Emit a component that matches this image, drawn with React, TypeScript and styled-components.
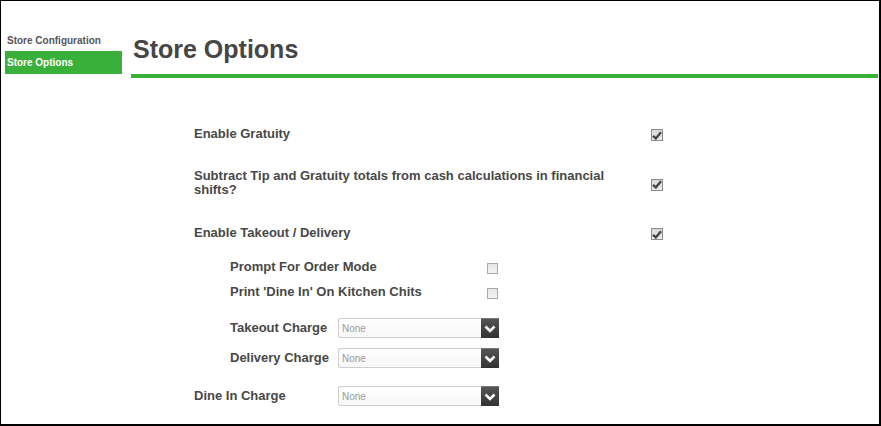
import React from "react";
import styled, { createGlobalStyle } from "styled-components";

const Global = createGlobalStyle`
  html, body { margin: 0; padding: 0; background: #fff; }
  body { font-family: "Liberation Sans", Arial, sans-serif; }
`;

const Frame = styled.div`
  width: 881px;
  height: 426px;
  box-sizing: border-box;
  border-top: 1px solid #000;
  border-left: 1px solid #000;
  border-right: 2px solid #000;
  border-bottom: 2px solid #000;
  display: flex;
  background: #fff;
  overflow: hidden;
`;

const Sidebar = styled.nav`
  width: 130px;
  flex: none;
  box-sizing: border-box;
  padding: 34px 0 0 4px;
  display: flex;
  flex-direction: column;
`;

const NavItem = styled.div<{ $active?: boolean }>`
  width: 117px;
  height: ${(p) => (p.$active ? "23px" : "16px")};
  line-height: ${(p) => (p.$active ? "23px" : "12px")};
  padding-left: 2px;
  box-sizing: border-box;
  font-size: 10px;
  font-weight: bold;
  color: ${(p) => (p.$active ? "#fff" : "#555")};
  background: ${(p) => (p.$active ? "#39b03a" : "transparent")};
`;

const Main = styled.main`
  flex: 1;
  margin-right: 1px;
  display: flex;
  flex-direction: column;
`;

const Title = styled.h1`
  margin: 0;
  padding: 34px 0 0 2px;
  font-size: 25px;
  line-height: 29px;
  font-weight: bold;
  color: #464646;
`;

const Rule = styled.div`
  height: 4px;
  background: #39b03a;
  margin-top: 10px;
`;

const Form = styled.div`
  padding: 48px 0 0 63px;
  display: flex;
  flex-direction: column;
`;

const Row = styled.div<{ $indent?: boolean; $mt?: number; $gap?: number }>`
  display: flex;
  align-items: center;
  gap: ${(p) => p.$gap ?? 0}px;
  margin-top: ${(p) => p.$mt ?? 0}px;
  padding-left: ${(p) => (p.$indent ? 36 : 0)}px;
`;

const Label = styled.div<{ $w: number }>`
  width: ${(p) => p.$w}px;
  flex: none;
  font-size: 13px;
  line-height: 14px;
  font-weight: bold;
  color: #484848;
`;

const Box = styled.span<{ $checked?: boolean }>`
  display: inline-flex;
  align-items: center;
  justify-content: center;
  box-sizing: border-box;
  width: ${(p) => (p.$checked ? 12 : 11)}px;
  height: ${(p) => (p.$checked ? 12 : 11)}px;
  margin-top: 3px;
  border: 1px solid ${(p) => (p.$checked ? "#8c8c8c" : "#a9a9a9")};
  background: ${(p) => (p.$checked ? "linear-gradient(#d8d8d8, #ececec)" : "linear-gradient(#e6e6e6, #f4f4f4)")};
`;

const SelectWrap = styled.div`
  display: flex;
  width: 161px;
  height: 20px;
`;

const SelectField = styled.div`
  flex: 1;
  box-sizing: border-box;
  border: 1px solid #cfcfcf;
  border-right: none;
  border-radius: 3px 0 0 3px;
  padding-left: 3px;
  font-size: 10px;
  line-height: 19px;
  color: #9a9a9a;
  background: linear-gradient(#fff, #f7f7f7);
`;

const SelectButton = styled.div`
  width: 18px;
  flex: none;
  display: flex;
  align-items: center;
  justify-content: center;
  background: linear-gradient(#555, #333);
  border-top: 1px solid #777;
  box-sizing: border-box;
`;

const Check = ({ checked }: { checked?: boolean }) => (
  <Box $checked={checked}>
    {checked && (
      <svg width="10" height="9" viewBox="0 0 10 9">
        <path d="M1 4.8 L3.8 7.4 L9 1.2" fill="none" stroke="#454545" strokeWidth="2.4" />
      </svg>
    )}
  </Box>
);

const Select = () => (
  <SelectWrap>
    <SelectField>None</SelectField>
    <SelectButton>
      <svg width="12" height="8" viewBox="0 0 12 8">
        <path d="M1.5 1.5 L6 6 L10.5 1.5" fill="none" stroke="#fff" strokeWidth="2.6" />
      </svg>
    </SelectButton>
  </SelectWrap>
);

export default function App() {
  return (
    <>
      <Global />
      <Frame>
        <Sidebar>
          <NavItem>Store Configuration</NavItem>
          <NavItem $active>Store Options</NavItem>
        </Sidebar>
        <Main>
          <Title>Store Options</Title>
          <Rule />
          <Form>
            <Row $gap={17}>
              <Label $w={440}>Enable Gratuity</Label>
              <Check checked />
            </Row>
            <Row $mt={28} $gap={17}>
              <Label $w={440}>Subtract Tip and Gratuity totals from cash calculations in financial shifts?</Label>
              <Check checked />
            </Row>
            <Row $mt={28} $gap={17}>
              <Label $w={440}>Enable Takeout / Delivery</Label>
              <Check checked />
            </Row>
            <Row $indent $mt={20}>
              <Label $w={257}>Prompt For Order Mode</Label>
              <Check />
            </Row>
            <Row $indent $mt={11}>
              <Label $w={257}>Print 'Dine In' On Kitchen Chits</Label>
              <Check />
            </Row>
            <Row $indent $mt={19}>
              <Label $w={108}>Takeout Charge</Label>
              <Select />
            </Row>
            <Row $indent $mt={10}>
              <Label $w={108}>Delivery Charge</Label>
              <Select />
            </Row>
            <Row $mt={18}>
              <Label $w={144}>Dine In Charge</Label>
              <Select />
            </Row>
          </Form>
        </Main>
      </Frame>
    </>
  );
}
